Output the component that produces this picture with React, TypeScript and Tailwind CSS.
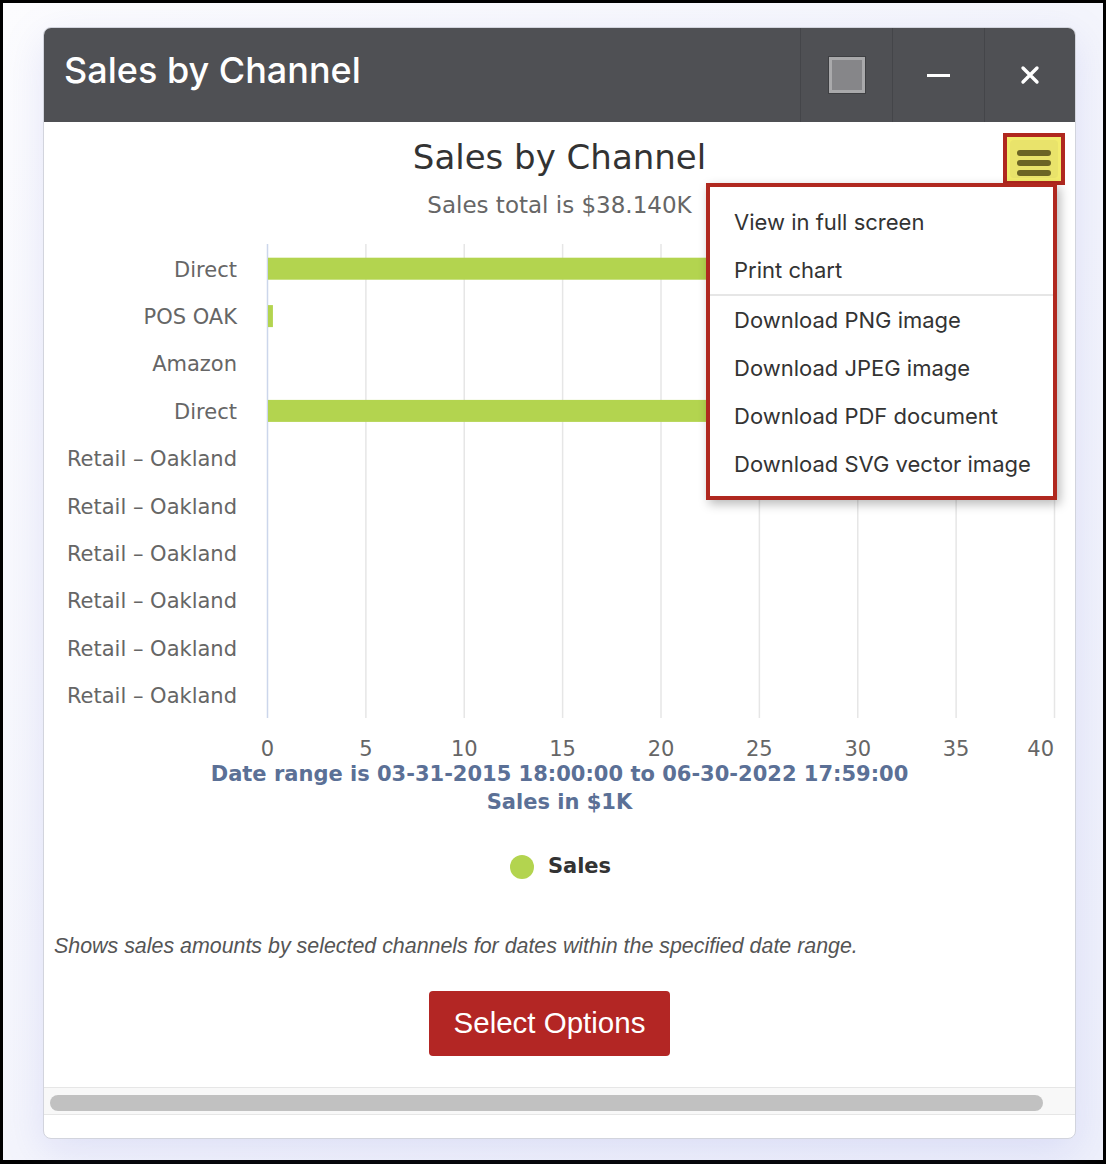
import React from "react";

const cats = [
  "Direct",
  "POS OAK",
  "Amazon",
  "Direct",
  "Retail – Oakland",
  "Retail – Oakland",
  "Retail – Oakland",
  "Retail – Oakland",
  "Retail – Oakland",
  "Retail – Oakland",
];
const vals = [24.5, 0.25, 0, 24.1, 0, 0, 0, 0, 0, 0];
const PW = 787;
const PH = 474;
const RH = PH / 10;
const U = PW / 40;
const ticks = [0, 5, 10, 15, 20, 25, 30, 35, 40];

function Plot() {
  return (
    <svg width={PW + 2} height={516} className="block overflow-visible">
      {ticks.slice(1).map((t) => (
        <line key={t} x1={t * U + 0.5} x2={t * U + 0.5} y1={0} y2={PH} stroke="#e6e6e6" strokeWidth={1.5} />
      ))}
      <line x1={0.5} x2={0.5} y1={0} y2={PH} stroke="#ccd6eb" strokeWidth={1.5} />
      {vals.map((v, i) =>
        v > 0 ? (
          <rect key={i} x={1} y={i * RH + RH / 2 - 10} width={v * U} height={22} fill="#b3d44f" />
        ) : null
      )}
      {ticks.map((t, i) => (
        <text
          key={t}
          x={i === ticks.length - 1 ? t * U : t * U + 0.5}
          y={PH + 38}
          textAnchor={i === ticks.length - 1 ? "end" : "middle"}
          fontSize={21}
          fill="#666666"
          fontFamily="'DejaVu Sans', sans-serif"
        >
          {t}
        </text>
      ))}
    </svg>
  );
}

export default function App() {
  return (
    <div className="w-[1106px] h-[1164px] bg-black pt-[3px] pl-[3px] pr-[3px] pb-[4px]">
      <div className="w-full h-full bg-gradient-to-br from-[#fcfcfe] via-[#f4f5fc] to-[#eef0fb] pt-[24px] pl-[40px]">
        <div className="w-[1033px] rounded-[8px] border border-[#d2d4dd] bg-white overflow-hidden shadow-[0_12px_40px_rgba(120,130,220,0.18)]">
          {/* Header */}
          <div className="h-[94px] bg-[#4f5054] flex items-center">
            <div className="flex-1 pl-[20px] text-white text-[36px] font-medium font-['Inter',sans-serif] leading-none pb-[10px]">
              Sales by Channel
            </div>
            <div className="flex h-full">
              <div className="w-[92px] h-full border-l border-[#444549] flex items-center justify-center">
                <div className="w-[38px] h-[38px] bg-[#3e3f42] p-[1px]">
                  <div className="w-full h-full border-[3px] border-[#a9a9ab] bg-[#868689]" />
                </div>
              </div>
              <div className="w-[92px] h-full border-l border-[#444549] flex items-center justify-center">
                <div className="w-[23px] h-[3px] bg-white" />
              </div>
              <div className="w-[91px] h-full border-l border-[#444549] flex items-center justify-center">
                <svg width="20" height="20" viewBox="0 0 20 20">
                  <path d="M3 3 L17 17 M17 3 L3 17" stroke="white" strokeWidth="3.4" strokeLinecap="round" />
                </svg>
              </div>
            </div>
          </div>

          {/* Body */}
          <div className="relative flex flex-col">
            <div className="pt-[15px] text-center text-[34px] leading-[40px] text-[#333333] font-['DejaVu_Sans',sans-serif]">
              Sales by Channel
            </div>
            <div className="mt-[14px] text-center text-[23px] leading-[28px] text-[#666666] font-['DejaVu_Sans',sans-serif]">
              Sales total is $38.140K
            </div>

            <div className="mt-[25px] flex items-start">
              <div className="w-[193px] pl-[2px] flex flex-col font-['DejaVu_Sans',sans-serif] text-[21px] text-[#666666]">
                {cats.map((c, i) => (
                  <div key={i} className="h-[47.4px] pt-[5px] flex items-center justify-end leading-none">
                    {c}
                  </div>
                ))}
              </div>
              <div className="ml-[30px]">
                <Plot />
              </div>
            </div>

            <div className="text-center font-['DejaVu_Sans',sans-serif] font-bold text-[21px] leading-[28px] text-[#5b7096]">
              <div>Date range is 03-31-2015 18:00:00 to 06-30-2022 17:59:00</div>
              <div>Sales in $1K</div>
            </div>

            <div className="mt-[36px] h-[30px] flex items-center justify-center gap-[14px] pl-[2px]">
              <div className="w-[24px] h-[24px] rounded-full bg-[#b3d44f]" />
              <div className="font-['DejaVu_Sans',sans-serif] font-bold text-[21px] text-[#333333]">Sales</div>
            </div>

            <div className="mt-[52px] pl-[10px] text-[21.4px] leading-[24px] italic text-[#555555] font-['Liberation_Sans',Arial,sans-serif]">
              Shows sales amounts by selected channels for dates within the specified date range.
            </div>

            <div className="mt-[33px] flex justify-center pr-[20px]">
              <button className="w-[241px] h-[65px] rounded-[4px] bg-[#b32624] text-white text-[29.5px] font-['Liberation_Sans',Arial,sans-serif] flex items-center justify-center">
                Select Options
              </button>
            </div>

            <div className="mt-[31px] border-t border-b border-[#e6e6e6] h-[28px] bg-[#f8f8f8] pl-[6px] pt-[7px]">
              <div className="w-[993px] h-[16px] rounded-full bg-[#c1c1c1]" />
            </div>
            <div className="h-[23px]" />

            {/* Menu button */}
            <div className="absolute left-[959px] top-[11px] w-[62px] h-[52px] border-[4px] border-[#b0281f] bg-[#f2ec6d] p-[3px]">
              <div className="w-full h-full rounded-[4px] bg-[#e9e36b] flex flex-col items-center justify-center gap-[4px] pt-[8px]">
                <div className="w-[34px] h-[6px] rounded-full bg-[#6b6424]" />
                <div className="w-[34px] h-[6px] rounded-full bg-[#6b6424]" />
                <div className="w-[34px] h-[6px] rounded-full bg-[#6b6424]" />
              </div>
            </div>

            {/* Dropdown menu */}
            <div className="absolute left-[662px] top-[61px] w-[351px] border-[4px] border-[#b0281f] bg-white pt-[11px] pb-[8px] shadow-[3px_4px_10px_rgba(0,0,0,0.28)] font-['Inter',sans-serif] text-[22px] text-[#333333]">
              <div className="h-[48px] flex items-center pl-[24px]">View in full screen</div>
              <div className="h-[48px] flex items-center pl-[24px]">Print chart</div>
              <div className="h-[2px] bg-[#e6e6e6]" />
              <div className="h-[48px] flex items-center pl-[24px]">Download PNG image</div>
              <div className="h-[48px] flex items-center pl-[24px]">Download JPEG image</div>
              <div className="h-[48px] flex items-center pl-[24px]">Download PDF document</div>
              <div className="h-[48px] flex items-center pl-[24px]">Download SVG vector image</div>
            </div>
          </div>
        </div>
      </div>
    </div>
  );
}
